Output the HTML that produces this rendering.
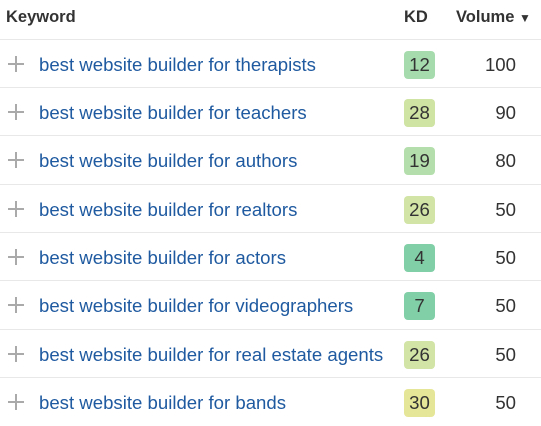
<!DOCTYPE html>
<html><head><style>
body{margin:0;width:541px;height:425px;background:#fff;font-family:"Liberation Sans",Arial,sans-serif;overflow:hidden}
.h{position:absolute;top:0;height:40px;line-height:34px;font-weight:bold;font-size:16.5px;color:#333}
.row{position:absolute;left:0;width:541px;height:48px;border-top:1px solid #e8e8e8}
.p{position:absolute;left:8px;top:16px;width:16px;height:16px}
.p:before{content:"";position:absolute;left:7px;top:0;width:2px;height:16px;background:#aaa}
.p:after{content:"";position:absolute;left:0;top:7px;width:16px;height:2px;background:#aaa}
.k{position:absolute;left:39px;top:14px;font-size:18.6px;color:#1f5aa0}
.b{position:absolute;left:404px;top:11px;width:31px;height:28px;border-radius:4px;text-align:center;line-height:28px;font-size:18.6px;color:#333}
.v{position:absolute;right:25px;top:14px;font-size:18.6px;color:#333}
</style></head><body>
<div class="h" style="left:6px">Keyword</div>
<div class="h" style="left:404px">KD</div>
<div class="h" style="left:456px">Volume <span style="font-size:12px">▼</span></div>
<div class="row" style="top:39px"><div class="p"></div><div class="k">best website builder for therapists</div><div class="b" style="background:#a6dbae">12</div><div class="v">100</div></div>
<div class="row" style="top:87px"><div class="p"></div><div class="k">best website builder for teachers</div><div class="b" style="background:#cfe3a2">28</div><div class="v">90</div></div>
<div class="row" style="top:135px"><div class="p"></div><div class="k">best website builder for authors</div><div class="b" style="background:#b4dfac">19</div><div class="v">80</div></div>
<div class="row" style="top:184px"><div class="p"></div><div class="k">best website builder for realtors</div><div class="b" style="background:#d2e4a6">26</div><div class="v">50</div></div>
<div class="row" style="top:232px"><div class="p"></div><div class="k">best website builder for actors</div><div class="b" style="background:#80cfa7">4</div><div class="v">50</div></div>
<div class="row" style="top:280px"><div class="p"></div><div class="k">best website builder for videographers</div><div class="b" style="background:#80cfa7">7</div><div class="v">50</div></div>
<div class="row" style="top:329px"><div class="p"></div><div class="k">best website builder for real estate agents</div><div class="b" style="background:#d2e4a6">26</div><div class="v">50</div></div>
<div class="row" style="top:377px"><div class="p"></div><div class="k">best website builder for bands</div><div class="b" style="background:#e6e698">30</div><div class="v">50</div></div>
</body></html>
